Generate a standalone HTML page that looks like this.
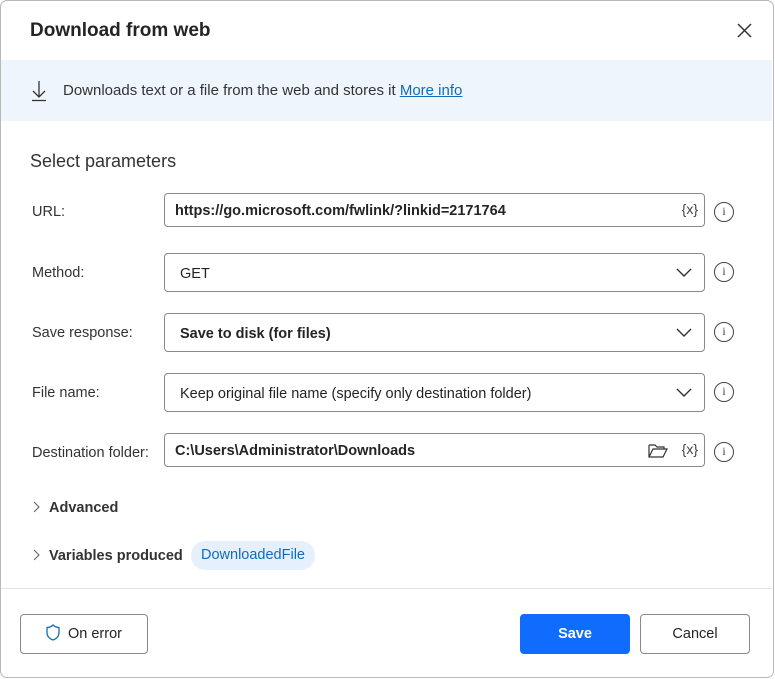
<!DOCTYPE html>
<html><head><meta charset="utf-8"><style>
*{box-sizing:border-box;margin:0;padding:0}
body{width:775px;height:679px;background:#fff;font-family:"Liberation Sans",sans-serif;color:#242424;position:relative;overflow:hidden}
.win{position:absolute;left:0;top:0;width:774px;height:678px;border:1px solid #b8b8b8;border-radius:7px;background:#fff}
.abs{position:absolute}
.title{left:30px;top:20px;font-size:19px;font-weight:600;color:#242424}
.band{left:1px;top:60px;width:771px;height:61px;background:#eff5fd}
.desc{left:63px;top:82px;font-size:15px;color:#333}
.desc a{color:#0f6cbd;text-decoration:underline}
.sel{left:30px;top:151px;font-size:18px;color:#333}
.lbl{left:32px;font-size:14.5px;color:#333}
.box{left:164px;width:541px;border:1px solid #8a8a8a;border-radius:4px;background:#fff}
.val{position:absolute;left:15px;font-size:14.5px;color:#242424}
.b{font-weight:600}
.x{position:absolute;right:6px;font-size:14px;color:#444}
.chev{position:absolute;right:12px}
.info{position:absolute;left:714px;width:20px;height:20px;border:1.3px solid #444;border-radius:50%;font-size:12px;text-align:center;line-height:17px;color:#444;font-family:"Liberation Serif",serif}
.exp{left:49px;font-size:14.5px;font-weight:600;color:#333}
.pill{left:191px;top:541px;width:124px;height:29px;background:#e6f0fd;border-radius:14px;color:#0f6cbd;font-size:14.5px;text-align:center;line-height:29px}
.sep{left:1px;top:588px;width:771px;height:1px;background:#e4e4e4}
.btn{top:614px;height:40px;border:1px solid #8a8a8a;border-radius:4px;font-size:14.5px;text-align:center;line-height:38px;font-weight:600;color:#242424;background:#fff}
</style></head><body>
<div class="win"></div>
<div class="abs title">Download from web</div>
<svg class="abs" style="left:737px;top:23px" width="15" height="15"><path d="M1 1L14 14M14 1L1 14" stroke="#333" stroke-width="1.5"/></svg>
<div class="abs band"></div>
<svg class="abs" style="left:31px;top:80px" width="16" height="22"><path d="M8 1V17M2 11L8 17L14 11M1 20.5H15" stroke="#333" stroke-width="1.3" fill="none"/></svg>
<div class="abs desc">Downloads text or a file from the web and stores it <a>More info</a></div>
<div class="abs sel">Select parameters</div>

<div class="abs lbl" style="top:204px">URL:</div>
<div class="abs box" style="top:193px;height:34px"><span class="val b" style="left:10px;top:9px">https://go.microsoft.com/fwlink/?linkid=2171764</span><span class="x" style="top:7px">{x}</span></div>
<div class="info" style="top:202px">i</div>

<div class="abs lbl" style="top:265px">Method:</div>
<div class="abs box" style="top:253px;height:39px"><span class="val" style="top:12px">GET</span><svg class="chev" style="top:14px" width="16" height="10"><path d="M1 1L8 8L15 1" stroke="#333" stroke-width="1.4" fill="none"/></svg></div>
<div class="info" style="top:262px">i</div>

<div class="abs lbl" style="top:325px">Save response:</div>
<div class="abs box" style="top:313px;height:39px"><span class="val b" style="top:12px">Save to disk (for files)</span><svg class="chev" style="top:14px" width="16" height="10"><path d="M1 1L8 8L15 1" stroke="#333" stroke-width="1.4" fill="none"/></svg></div>
<div class="info" style="top:322px">i</div>

<div class="abs lbl" style="top:385px">File name:</div>
<div class="abs box" style="top:373px;height:39px"><span class="val" style="top:12px">Keep original file name (specify only destination folder)</span><svg class="chev" style="top:14px" width="16" height="10"><path d="M1 1L8 8L15 1" stroke="#333" stroke-width="1.4" fill="none"/></svg></div>
<div class="info" style="top:382px">i</div>

<div class="abs lbl" style="top:445px">Destination folder:</div>
<div class="abs box" style="top:433px;height:34px"><span class="val b" style="left:10px;top:9px">C:\Users\Administrator\Downloads</span>
<svg style="position:absolute;left:483px;top:9px" width="20" height="15"><path d="M1 2H7L9 4H16V6M1 2V14H15L19 6H5L1 14" stroke="#333" stroke-width="1.2" fill="none"/></svg>
<span class="x" style="top:7px">{x}</span></div>
<div class="info" style="top:442px">i</div>

<svg class="abs" style="left:33px;top:501px" width="7" height="12"><path d="M1 1L6 6L1 11" stroke="#666" stroke-width="1.1" fill="none"/></svg>
<div class="abs exp" style="top:500px">Advanced</div>
<svg class="abs" style="left:33px;top:549px" width="7" height="12"><path d="M1 1L6 6L1 11" stroke="#666" stroke-width="1.1" fill="none"/></svg>
<div class="abs exp" style="top:548px">Variables produced</div>
<div class="abs pill">DownloadedFile</div>
<div class="abs sep"></div>
<div class="abs btn" style="left:20px;width:128px;font-weight:400"><svg style="vertical-align:-3px;margin-right:8px" width="14" height="17"><path d="M7 1C5 3 3 3.5 1 3.5V9C1 12.5 4 15 7 16C10 15 13 12.5 13 9V3.5C11 3.5 9 3 7 1Z" stroke="#0f6cbd" stroke-width="1.3" fill="none"/></svg>On error</div>
<div class="abs btn" style="left:520px;width:110px;background:#0f6cfd;border-color:#0f6cfd;color:#fff">Save</div>
<div class="abs btn" style="left:640px;width:110px;font-weight:400">Cancel</div>
</body></html>
